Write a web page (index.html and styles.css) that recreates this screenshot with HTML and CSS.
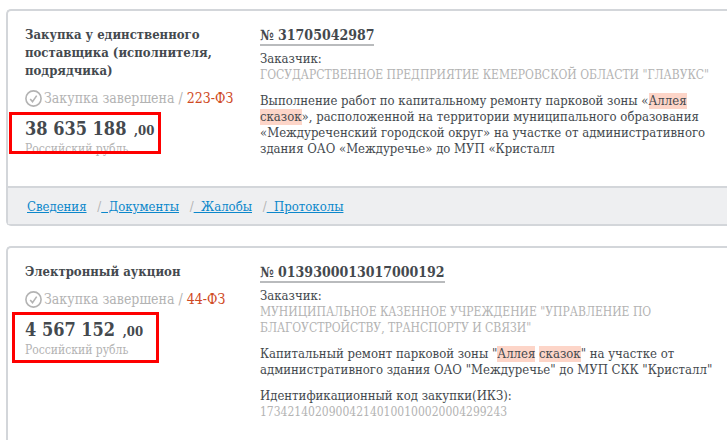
FILE: index.html
```html
<!DOCTYPE html>
<html lang="ru">
<head>
    <meta charset="utf-8">
    <title>Результаты поиска закупок</title>
    <link rel="stylesheet" href="styles.css">
</head>
<body>
    <div class="card">
        <div class="card-body">
            <div class="summary">
                <h3>Закупка у единственного<br>поставщика (исполнителя,<br>подрядчика)</h3>
                <p class="status">
                    <svg class="check" viewBox="0 0 17 17"><circle cx="8.5" cy="8.5" r="7.6"/><path d="M5.2 9l2.3 2.6 4.2-6"/></svg>
                    <span>Закупка завершена / <span class="law">223-ФЗ</span></span>
                </p>
                <div class="price marked cut">
                    <strong>38 635 188 <span class="cents">,00</span></strong>
                    <small>Российский рубль</small>
                </div>
            </div>
            <div class="details">
                <a class="number" href="#">№ 31705042987</a>
                <dl>
                    <dt>Заказчик:</dt>
                    <dd>ГОСУДАРСТВЕННОЕ ПРЕДПРИЯТИЕ КЕМЕРОВСКОЙ ОБЛАСТИ "ГЛАВУКС"</dd>
                </dl>
                <p>Выполнение работ по капитальному ремонту парковой зоны «<mark>Аллея</mark><br><mark>сказок</mark>», расположенной на территории муниципального образования<br>«Междуреченский городской округ» на участке от административного<br>здания ОАО «Междуречье» до МУП «Кристалл</p>
            </div>
        </div>
        <div class="card-links">
            <a href="#">Сведения</a>
            <i>/</i><a href="#">&nbsp;&nbsp;Документы</a>
            <i>/</i><a href="#">&nbsp;&nbsp;Жалобы</a>
            <i>/</i><a href="#">&nbsp;&nbsp;Протоколы</a>
        </div>
    </div>

    <div class="card">
        <div class="card-body">
            <div class="summary">
                <h3>Электронный аукцион</h3>
                <p class="status">
                    <svg class="check" viewBox="0 0 17 17"><circle cx="8.5" cy="8.5" r="7.6"/><path d="M5.2 9l2.3 2.6 4.2-6"/></svg>
                    <span>Закупка завершена / <span class="law">44-ФЗ</span></span>
                </p>
                <div class="price marked">
                    <strong>4 567 152 <span class="cents">,00</span></strong>
                    <small>Российский рубль</small>
                </div>
            </div>
            <div class="details">
                <a class="number" href="#">№ 0139300013017000192</a>
                <dl>
                    <dt>Заказчик:</dt>
                    <dd>МУНИЦИПАЛЬНОЕ КАЗЕННОЕ УЧРЕЖДЕНИЕ "УПРАВЛЕНИЕ ПО<br>БЛАГОУСТРОЙСТВУ, ТРАНСПОРТУ И СВЯЗИ"</dd>
                </dl>
                <p>Капитальный ремонт парковой зоны "<mark>Аллея</mark> <mark>сказок</mark>" на участке от<br>административного здания ОАО "Междуречье" до МУП СКК "Кристалл"</p>
                <dl>
                    <dt>Идентификационный код закупки(ИКЗ):</dt>
                    <dd>173421402090042140100100020004299243</dd>
                </dl>
            </div>
        </div>
    </div>
</body>
</html>
```

FILE: styles.css
```css
body {
    margin: 9px 0 0 6px;
    font-family: "Roboto Slab", "DejaVu Serif Condensed", "DejaVu Serif", serif;
    font-size: 13px;
    line-height: 16px;
    color: #44494e;
    background: #fff;
    overflow: hidden;
}

h3, p, dl, dd {
    margin: 0;
}

.card {
    border: 2px solid #d3d6da;
    border-right: 0;
    border-radius: 5px 0 0 5px;
    margin-bottom: 20px;
}

.card-body {
    display: flex;
    padding: 15px 0 29px 17px;
}

.summary {
    flex: 0 0 235px;
}

.details {
    flex: 1;
    white-space: nowrap;
}

h3 {
    font-size: 13px;
    line-height: 18px;
}

/* status line with the round tick */
.status {
    display: flex;
    align-items: center;
    gap: 2px;
    height: 18px;
    margin-top: 9px;
    font-size: 14px;
    color: #b3b3b3;
    white-space: nowrap;
}

.check {
    width: 17px;
    height: 17px;
    fill: none;
    stroke: #b3b3b3;
    stroke-width: 1.6;
}

.law {
    color: #cf4a24;
}

.price {
    position: relative;
    margin-top: 10px;
    white-space: nowrap;
}

.price strong {
    display: block;
    font-size: 18px;
    line-height: 24px;
}

.price .cents {
    margin-left: 2px;
    font-size: 13px;
}

.price small {
    display: block;
    font-size: 12px;
    line-height: 12px;
    color: #b3b3b3;
}

/* red frame over the price */
.marked::after {
    content: "";
    position: absolute;
    top: -6px;
    left: -13px;
    width: 141px;
    height: 45px;
    border: 3px solid #fe0000;
}

.cut::after {
    top: -5px;
    left: -16px;
    width: 146px;
    height: 36px;
}

.number {
    display: inline-block;
    font-size: 14px;
    font-weight: bold;
    line-height: 18px;
    color: #44494e;
    text-decoration: none;
    border-bottom: 2px solid #b9bbbd;
}

.details dl {
    margin-top: 5px;
}

.details p {
    margin-top: 10px;
}

.details p + dl {
    margin-top: 10px;
}

dd {
    font-size: 12px;
    color: #b3b3b3;
}

mark {
    display: inline-block;
    color: inherit;
    background: #fdd5c8;
}

.card-links {
    padding: 11px 19px 9px;
    border-top: 2px solid #d3d6da;
    background: #eeeff1;
}

.card-links a {
    color: #0b87cb;
}

.card-links i {
    margin-left: 7px;
    color: #b3b3b3;
    font-style: normal;
}
```
